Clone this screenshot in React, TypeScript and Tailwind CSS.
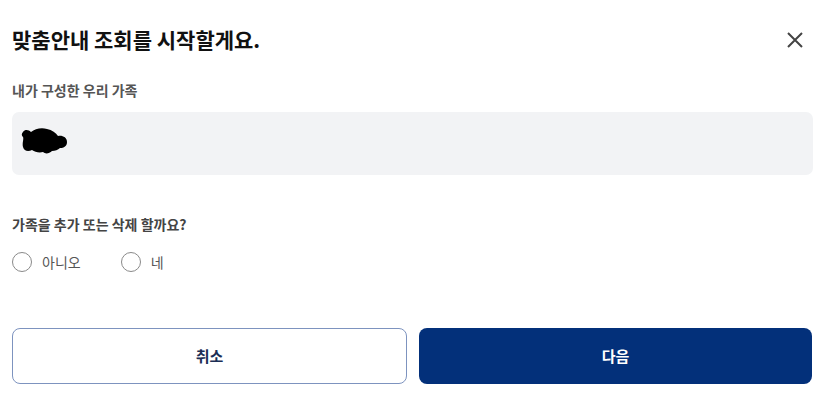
import React, { useState } from "react";

const font = { fontFamily: '"Noto Sans CJK KR", "Noto Sans", sans-serif' };

function Radio({
  label,
  checked,
  onClick,
}: {
  label: string;
  checked: boolean;
  onClick: () => void;
}) {
  return (
    <button type="button" onClick={onClick} className="flex items-center gap-[10px]">
      <span
        className={`flex h-[20px] w-[20px] items-center justify-center rounded-full border-[1.5px] ${
          checked ? "border-[#03307a]" : "border-[#8a8a8a]"
        }`}
      >
        {checked && <span className="h-[10px] w-[10px] rounded-full bg-[#03307a]" />}
      </span>
      <span className="text-[14px] leading-none text-[#555]">{label}</span>
    </button>
  );
}

export default function App() {
  const [answer, setAnswer] = useState<"no" | "yes" | null>(null);

  return (
    <div className="h-[400px] w-[824px] bg-white px-[12px]" style={font}>
      {/* header */}
      <div className="flex h-[80px] items-center justify-between pb-[1px]">
        <h2 className="text-[21px] font-bold text-[#111]">
          맞춤안내 조회를 시작할게요.
        </h2>
        <button type="button" className="mr-[8px] text-[#444]" aria-label="닫기">
          <svg width="18" height="18" viewBox="0 0 18 18" fill="none">
            <path d="M2 2L16 16M16 2L2 16" stroke="currentColor" strokeWidth="2" />
          </svg>
        </button>
      </div>

      <p className="text-[14px] font-semibold leading-[20px] text-[#555]">내가 구성한 우리 가족</p>

      <div className="mt-[12px] flex h-[63px] w-[801px] items-center rounded-[7px] bg-[#f2f3f5] px-[8px]">
        <svg width="48" height="36" viewBox="0 0 48 36">
          <path
            d="M3 6c2-3 6-2 8 0 4-3 10-5 16-3 5 1 9 4 11 7 4-1 9 1 9 6 0 4-3 6-7 6-2 2-5 3-8 3-3 3-7 3-9 1-4 1-8 0-11-2-4 2-8 1-9-3-1-4 1-8 0-10C1 9 2 7 3 6z"
            fill="#000"
          />
        </svg>
      </div>

      <p className="mt-[39px] text-[14px] font-semibold leading-[20px] text-[#444]">
        가족을 추가 또는 삭제 할까요?
      </p>

      <div className="mt-[18px] flex items-center gap-[40px]">
        <Radio label="아니오" checked={answer === "no"} onClick={() => setAnswer("no")} />
        <Radio label="네" checked={answer === "yes"} onClick={() => setAnswer("yes")} />
      </div>

      <div className="mt-[56px] flex w-[800px] gap-[12px]">
        <button
          type="button"
          className="h-[56px] flex-1 rounded-[8px] border border-[#7d93bf] bg-white text-[15px] font-bold text-[#1b2e55]"
        >
          취소
        </button>
        <button
          type="button"
          className="h-[56px] flex-1 rounded-[8px] bg-[#03307a] text-[15px] font-bold text-white"
        >
          다음
        </button>
      </div>
    </div>
  );
}
